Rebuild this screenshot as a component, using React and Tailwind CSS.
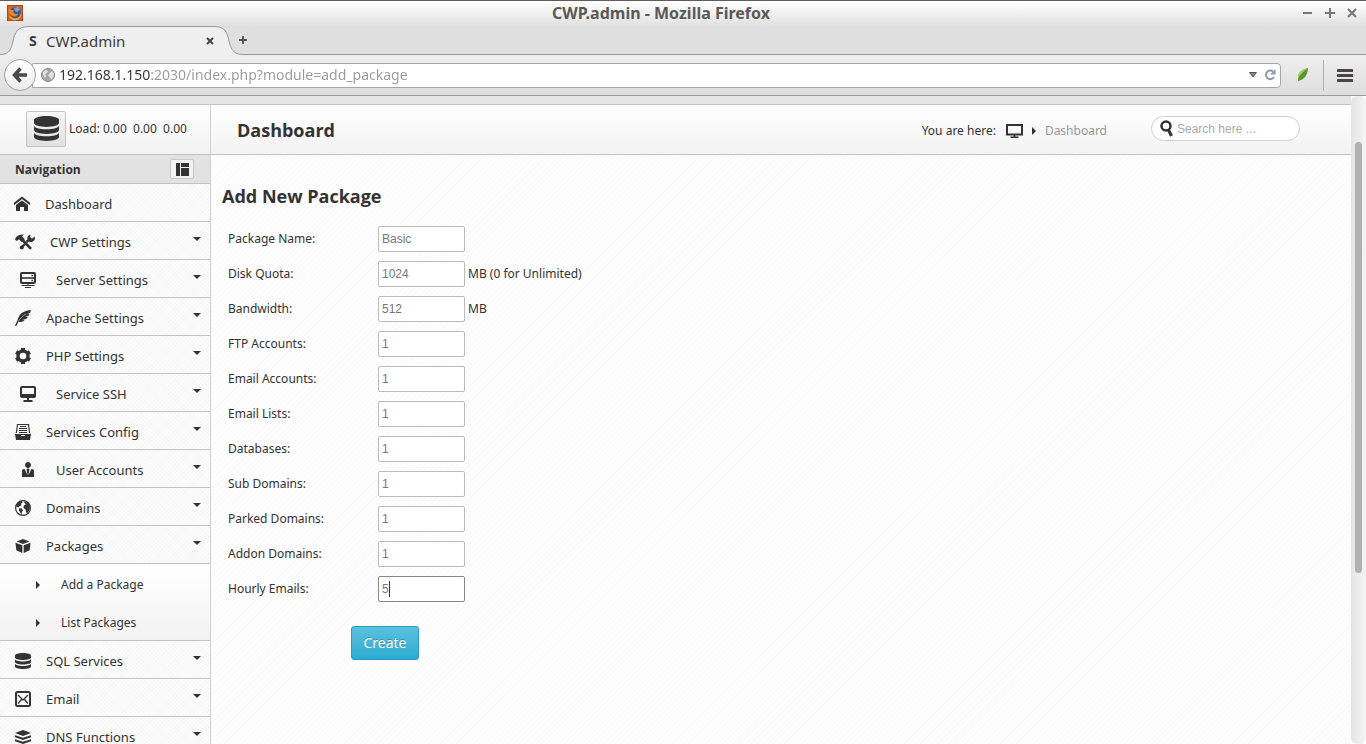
import React, { useState } from 'react';
import { ImHome, ImDatabase, ImUserTie } from 'react-icons/im';

const ToolsIcon = () => (
  <svg viewBox="0 0 20 16" className="w-5 h-4" fill="none" stroke="currentColor">
    <path d="M0 5.500C1 2 4 .3 9 .5L7 2.200l2.800 3-3 3L4 5.200 1.800 7z" fill="currentColor" stroke="none" />
    <path d="M8 6.500l8 8.300" strokeWidth="2.600" />
    <path d="M6.500 13.500L10 10M11.500 8L15 5" strokeWidth="2.400" />
    <path d="M19.500 2.500a3.800 3.800 0 1 1-4-2L15 3l2 1.800z" fill="currentColor" stroke="none" />
    <circle cx="6.800" cy="13.600" r="2" fill="currentColor" stroke="none" />
  </svg>
);

const ServerIcon = () => (
  <svg viewBox="0 0 16 16" className="w-4 h-4" fill="none" stroke="currentColor">
    <rect x="1" y="1" width="14" height="10" rx="1" strokeWidth="2" />
    <path d="M1 6h14" strokeWidth="1.600" />
    <path d="M11.500 3.500h1.600M11.500 8.500h1.600" strokeWidth="1.400" />
    <path d="M8 11v3M1.500 13.500h13M5 15.500h6" strokeWidth="1.200" />
  </svg>
);

const FeatherIcon = () => (
  <svg viewBox="0 0 16 16" className="w-4 h-4" fill="currentColor">
    <path d="M16 0C10 .5 5 3 3.500 7.500 2.500 10.500 1 13 0 16h1.300l2-4c2.200.2 4.300-.3 6.200-1.500L7.700 9.800l3.600-.7 1.500-2-2.600-.2 3.500-1.200.8-1.700-2.300.2 2.900-1.500z" />
    <path d="M11 4C8 5.500 5 8.500 3 12" fill="none" stroke="#fafafa" strokeWidth=".5" />
  </svg>
);

const GearIcon = () => (
  <svg viewBox="0 0 16 16" className="w-4 h-4" fill="none" stroke="currentColor">
    <circle cx="8" cy="8" r="5" strokeWidth="3.400" />
    <path d="M8 0v3M8 13v3M1.100 4l2.600 1.500M12.300 10.500l2.600 1.500M1.100 12l2.600-1.500M12.300 5.500L14.900 4" strokeWidth="4" />
  </svg>
);

const MonitorIcon = () => (
  <svg viewBox="0 0 16 16" className="w-4 h-4" fill="none" stroke="currentColor">
    <rect x="1" y="1" width="14" height="10" rx="1" strokeWidth="2" />
    <path d="M1 9.500h14" strokeWidth="3" />
    <path d="M8 11v3M3.500 15h9" strokeWidth="2" />
  </svg>
);

const DisplayIcon = () => (
  <svg viewBox="0 0 17 14" className="w-[17px] h-[14px]" fill="none" stroke="currentColor">
    <rect x="1" y="1" width="15" height="9.500" strokeWidth="2" />
    <path d="M8.500 10v3M4.500 13.200h8" strokeWidth="1.600" />
  </svg>
);

const DrawerIcon = () => (
  <svg viewBox="0 0 16 16" className="w-4 h-4" fill="currentColor">
    <path fillRule="evenodd" d="M2 0h12l1.200 9h-1.200L13 1H3L2 9H.8z" />
    <path d="M5 2h6v1H5zM4 4h8v1H4zM4 6h8v1H4zM4 8h8v1H4z" />
    <path fillRule="evenodd" d="M0 10h16l-1 6H1zM6 11v1h4v-1z" />
  </svg>
);

const EarthIcon = () => (
  <svg viewBox="0 0 16 16" className="w-4 h-4">
    <circle cx="8" cy="8" r="7.400" fill="none" stroke="currentColor" strokeWidth="1.200" />
    <path d="M1 6C2 3 4 1.200 7 1l.5 1.500L5.800 4l1 1-2.300 1.200L3.500 7.500z" fill="currentColor" />
    <path d="M4 8.500l2.500-.2L8 10.500 6.800 12l-.3 2.500C5 13 4.800 11.500 4 10.500z" fill="currentColor" />
    <path d="M9 1.500l4 1.200L15 6l-.5 4-2 3-1.500-.5-.3-3L8.500 8l.3-2.500L11 4.500 9.500 3z" fill="currentColor" />
  </svg>
);

const PackageIcon = () => (
  <svg viewBox="0 0 16 16" className="w-4 h-4" fill="currentColor">
    <path d="M8 1l6.500 2.500L8 6 1.500 3.500z" />
    <path d="M.5 4.700L7.300 7.200V15L1.300 12.300z" />
    <path d="M15.500 4.700L8.700 7.200V15l6-2.700z" />
  </svg>
);

const EmailIcon = () => (
  <svg viewBox="0 0 16 16" className="w-4 h-4" fill="none" stroke="currentColor">
    <rect x="1" y="1" width="14" height="14" rx="1.500" strokeWidth="2" />
    <path d="M3 4l5 5 5-5M3 12.500l3.500-4M13 12.500l-3.500-4" strokeWidth="1.300" />
  </svg>
);

const StackIcon = () => (
  <svg viewBox="0 0 16 16" className="w-4 h-4" fill="currentColor">
    <path d="M8 1l8 3-8 3-8-3z" />
    <path d="M0 6.200l8 2.600 8-2.600v2L8 11 0 8.200z" />
    <path d="M0 10.200l8 2.600 8-2.600v2L8 15 0 12.200z" />
  </svg>
);

const LayoutIcon = () => (
  <svg viewBox="0 0 13 13" className="w-[13px] h-[13px]" fill="currentColor">
    <path d="M0 0h4v13H0zM5 0h8v4H5zM5 5h8v8H5z" />
  </svg>
);

const Globe = () => (
  <svg viewBox="0 0 14 14" className="w-[14px] h-[14px] shrink-0">
    <circle cx="7" cy="7" r="6.500" fill="#a6a6a6" stroke="#8c8c8c" />
    <path d="M2 4l3-2 2 1-1 2-2 1 1 2-1 2-2-3zM8 6l3-3 2 3-1 3-2 3-1-3-2-1z" fill="#e4e4e4" />
  </svg>
);

const FirefoxLogo = () => (
  <svg viewBox="0 0 16 16" className="w-4 h-4">
    <rect width="16" height="16" fill="#b4421c" />
    <rect x="1" y="1" width="14" height="14" fill="#d9601f" />
    <circle cx="8.500" cy="7.500" r="5.500" fill="#2a5f9e" />
    <path d="M7 3l4-1 2 3-3 2-2-1z" fill="#6fa6d6" />
    <path d="M2 3l2 2 3 0-1 2 2 2 3 0c-1 3-5 3-7 1C2 8 1 6 2 3z" fill="#e9842a" />
    <path d="M13 3c2 4 1 9-3 10-3 1-6 0-8-3 1 5 5 6 8 5 4-1 6-6 3-12z" fill="#f2a63a" />
  </svg>
);

const navItems = [
  { label: 'Dashboard', icon: <ImHome className="w-4 h-4" />, row: 'pl-[14px] gap-[15px]', leaf: true },
  { label: 'CWP Settings', icon: <ToolsIcon />, row: 'pl-[15px] gap-[15px]' },
  { label: 'Server Settings', icon: <ServerIcon />, row: 'pl-5 gap-5' },
  { label: 'Apache Settings', icon: <FeatherIcon />, row: 'pl-[15px] gap-[15px]' },
  { label: 'PHP Settings', icon: <GearIcon />, row: 'pl-[15px] gap-[15px]' },
  { label: 'Service SSH', icon: <MonitorIcon />, row: 'pl-5 gap-5' },
  { label: 'Services Config', icon: <DrawerIcon />, row: 'pl-[15px] gap-[15px]' },
  { label: 'User Accounts', icon: <ImUserTie className="w-4 h-4" />, row: 'pl-5 gap-5' },
  { label: 'Domains', icon: <EarthIcon />, row: 'pl-[15px] gap-[15px]' },
  { label: 'Packages', icon: <PackageIcon />, row: 'pl-[15px] gap-[15px]', sub: ['Add a Package', 'List Packages'] },
  { label: 'SQL Services', icon: <ImDatabase className="w-4 h-4" />, row: 'pl-[15px] gap-[15px]' },
  { label: 'Email', icon: <EmailIcon />, row: 'pl-[15px] gap-[15px]' },
  { label: 'DNS Functions', icon: <StackIcon />, row: 'pl-[15px] gap-[15px]' },
];

const fields = [
  { id: 'package_name', label: 'Package Name:', value: 'Basic' },
  { id: 'disk_quota', label: 'Disk Quota:', value: '1024', hint: 'MB (0 for Unlimited)' },
  { id: 'bandwidth', label: 'Bandwidth:', value: '512', hint: 'MB' },
  { id: 'ftp_accounts', label: 'FTP Accounts:', value: '1' },
  { id: 'email_accounts', label: 'Email Accounts:', value: '1' },
  { id: 'email_lists', label: 'Email Lists:', value: '1' },
  { id: 'databases', label: 'Databases:', value: '1' },
  { id: 'sub_domains', label: 'Sub Domains:', value: '1' },
  { id: 'parked_domains', label: 'Parked Domains:', value: '1' },
  { id: 'addon_domains', label: 'Addon Domains:', value: '1' },
  { id: 'hourly_emails', label: 'Hourly Emails:', value: '5', active: true },
];

const BrowserChrome = () => {
  const [url, setUrl] = useState('192.168.1.150:2030/index.php?module=add_package');

  return (
    <div className="shrink-0 text-[#3c3c3c]">
      <div className="bg-[linear-gradient(#ffffff,#dfdfdf_26px)] border-t border-[#5f5b5f]">
        {/* Title bar */}
        <div className="h-6 flex items-center pl-[7px] pr-[9px]">
          <FirefoxLogo />
          <div className="flex-1 pl-8 pr-9 text-center text-[16px] leading-5 font-bold text-[#5b5855]">CWP.admin - Mozilla Firefox</div>
          <div className="flex gap-3 text-[#777]">
            <button aria-label="Minimize"><svg viewBox="0 0 10 10" className="w-[10px] h-[10px]"><path d="M0 5h9" stroke="currentColor" strokeWidth="2" /></svg></button>
            <button aria-label="Maximize"><svg viewBox="0 0 10 10" className="w-[10px] h-[10px]"><path d="M0 5h10M5 0v10" stroke="currentColor" strokeWidth="2" /></svg></button>
            <button aria-label="Close"><svg viewBox="0 0 10 10" className="w-[10px] h-[10px]"><path d="M1 1l8 8M9 1l-8 8" stroke="currentColor" strokeWidth="2" /></svg></button>
          </div>
        </div>

        {/* Tabs */}
        <div className="h-[30px] pt-px flex">
          <svg viewBox="0 0 29 29" className="w-[29px] h-[29px] shrink-0">
            <path d="M0 28.500C10 28.500 11 23 13 15C15 6 18 .5 29 .5V29H0z" fill="#efefef" />
            <path d="M0 28.500C10 28.500 11 23 13 15C15 6 18 .5 29 .5" fill="none" stroke="#999" />
          </svg>
          <div className="w-[185px] flex items-center border-t border-[#999] bg-[#efefef]">
            <span className="w-[17px] text-[14px] leading-5 font-bold">S</span>
            <span className="flex-1 text-[15px] leading-5">CWP.admin</span>
            <button aria-label="Close tab">
              <svg viewBox="0 0 8 8" className="w-2 h-2"><path d="M1 1l6 6M7 1l-6 6" stroke="#444" strokeWidth="2" /></svg>
            </button>
          </div>
          <svg viewBox="0 0 29 29" className="w-[29px] h-[29px] shrink-0">
            <path d="M29 28.500C19 28.500 17 23 15 15C13 6 11 .5 0 .5V29H29z" fill="#efefef" />
            <path d="M29 28.500C19 28.500 17 23 15 15C13 6 11 .5 0 .5" fill="none" stroke="#999" />
          </svg>
          <div className="flex-1 flex items-center border-b border-[#999]">
            <button aria-label="New tab" className="-ml-1">
              <svg viewBox="0 0 8 8" className="w-2 h-2"><path d="M0 4h8M4 0v8" stroke="#555" strokeWidth="2" /></svg>
            </button>
          </div>
        </div>
      </div>

      {/* Navigation toolbar */}
      <div className="h-[41px] flex items-center pl-1 pr-[13px] border-b border-[#999] bg-linear-to-b from-[#eeeeee] to-[#dedede]">
        <button aria-label="Back" className="relative w-8 h-8 shrink-0 rounded-full border border-[#9aa1a9] bg-linear-to-b from-white to-[#ececec] flex items-center justify-center">
          <svg viewBox="0 0 16 16" className="w-4 h-4"><path d="M8.500 1.500L2.500 8l6 6.500M3 8h12" fill="none" stroke="#4a4a4a" strokeWidth="3.500" /></svg>
        </button>
        <div className="-ml-1 flex-1 h-[25px] flex items-center pl-2 pr-1 border border-[#a5a5a5] rounded-r-sm bg-white">
          <Globe />
          <input
            aria-label="Address"
            value={url}
            onChange={(e) => setUrl(e.target.value)}
            className="ml-1 flex-1 h-5 text-[14px] leading-5 outline-none text-transparent bg-clip-text bg-[linear-gradient(to_right,#333_92px,#999_92px)]"
          />
          <svg viewBox="0 0 8 6" className="w-2 h-[6px] mr-[7px]"><path d="M.5 .5h7L4 5z" fill="#888" stroke="#555" /></svg>
          <button aria-label="Reload">
            <svg viewBox="0 0 12 12" className="w-3 h-3"><path d="M9 2.500A4.300 4.300 0 1 0 10 8" fill="none" stroke="#8d9aa8" strokeWidth="2" /><path d="M11.500 0v5.500H6z" fill="#8d9aa8" /></svg>
          </button>
        </div>
        <svg viewBox="0 0 12 14" className="w-3 h-[14px] ml-4 mr-[14px] shrink-0">
          <path d="M11 0C6 1 1 4 1 9v4c5-1 10-5 10-13z" fill="#5f9432" />
          <path d="M11 0C6 1 1 4 1 9v3C2 7 6 4 11 0z" fill="#a3cf5c" />
        </svg>
        <span className="w-px h-[31px] bg-[#aab0b6] mr-[13px]" />
        <button aria-label="Menu">
          <svg viewBox="0 0 16 13" className="w-4 h-[13px]"><path d="M1 1.500h14M1 6.500h14M1 11.500h14" stroke="#4a4648" strokeWidth="3" strokeLinecap="round" /></svg>
        </button>
      </div>
    </div>
  );
};

const NavItem = ({ item }) => (
  <li>
    <a href="#" className={`h-[38px] pt-[3px] flex items-center border-b border-[#c2c2c2] text-[13px] leading-5 ${item.row}`}>
      {item.icon}
      <span className="flex-1">{item.label}</span>
      {!item.leaf && (
        <svg viewBox="0 0 8 4" className="w-2 h-1 mr-[9px] mb-[6px]"><path d="M0 0h8L4 4z" fill="currentColor" /></svg>
      )}
    </a>
    {item.sub && (
      <ul className="border-b border-[#c2c2c2] bg-linear-to-b from-white to-[#f2f2f2]">
        {item.sub.map((s) => (
          <li key={s}>
            <a href="#" className="h-[38px] pt-1 flex items-center gap-[21px] pl-9 text-[12px] leading-4">
              <svg viewBox="0 0 4 8" className="w-1 h-2"><path d="M0 0l4 4-4 4z" fill="currentColor" /></svg>
              {s}
            </a>
          </li>
        ))}
      </ul>
    )}
  </li>
);

const PackageForm = () => {
  const [values, setValues] = useState(Object.fromEntries(fields.map((f) => [f.id, f.value])));

  return (
    <form onSubmit={(e) => e.preventDefault()}>
      {fields.map((f) => (
        <div key={f.id} className="h-[35px] flex items-center pl-[6px]">
          <label htmlFor={f.id} className="w-[150px]">{f.label}</label>
          <div className="relative">
            <input
              id={f.id}
              value={values[f.id]}
              onChange={(e) => setValues({ ...values, [f.id]: e.target.value })}
              className={`block w-[87px] h-[26px] px-[3px] border rounded-xs bg-white font-['Liberation_Sans',sans-serif] text-[12px] text-[#777] outline-none ${f.active ? 'border-[#888]' : 'border-[#bbb]'}`}
            />
            {f.active && <span className="absolute left-[11px] top-[5px] w-px h-4 bg-[#333]" />}
          </div>
          {f.hint && <span className="pl-[3px]">{f.hint}</span>}
        </div>
      ))}
      <button className="mt-5 ml-[129px] w-[68px] h-[34px] rounded-[3px] border border-[#2a9cc4] bg-linear-to-b from-[#5bc0de] to-[#2aabd2] text-white text-[14px] leading-5 text-shadow-[0_-1px_0_rgba(0,0,0,0.25)]">
        Create
      </button>
    </form>
  );
};

const App = () => {
  const [search, setSearch] = useState('');

  return (
    <div className="h-screen flex flex-col overflow-hidden font-['Noto_Sans',sans-serif] text-[12px] leading-4 text-[#333]">
      <BrowserChrome />

      <div className="flex-1 min-h-0 flex">
        <div className="flex-1 min-w-0 flex flex-col overflow-hidden">
          <div className="h-[9px] shrink-0 border-b border-[#c2c2c2] bg-[#e4e4e4]" />

          {/* Header */}
          <header className="h-[50px] shrink-0 flex border-b border-[#c2c2c2] bg-linear-to-b from-white to-[#f2f2f2]">
            <div className="w-[211px] shrink-0 flex items-center pl-[26px] pb-[2px] gap-[3px] border-r border-[#d0d0d0]">
              <button aria-label="Server load" className="w-10 h-9 flex items-center justify-center border border-[#c4c4c4] rounded-xs bg-linear-to-b from-[#f7f7f7] to-[#e0e0e0]">
                <ImDatabase className="w-[25px] h-[25px]" />
              </button>
              <span className="whitespace-pre">Load: 0.00  0.00  0.00</span>
            </div>
            <div className="flex-1 flex items-center pl-[26px] pr-[51px]">
              <h1 className="flex-1 font-['Open_Sans',sans-serif] text-[18px] leading-6 font-bold">Dashboard</h1>
              <div className="flex items-center pt-[2px]">
                <span>You are here:</span>
                <span className="ml-[10px] mr-[9px]"><DisplayIcon /></span>
                <svg viewBox="0 0 4 8" className="w-1 h-2 mr-[9px]"><path d="M0 0l4 4-4 4z" fill="currentColor" /></svg>
                <span className="text-[#999]">Dashboard</span>
              </div>
              <label className="ml-11 w-[149px] h-[25px] mb-[2px] flex items-center pl-2 border border-[#d0d0d0] rounded-full bg-white">
                <svg viewBox="0 0 13 17" className="w-[13px] h-[17px] shrink-0"><circle cx="6" cy="6" r="4.500" fill="none" stroke="#333" strokeWidth="2.500" /><path d="M8.500 10l3 6" stroke="#333" strokeWidth="3" /></svg>
                <input
                  aria-label="Search"
                  placeholder="Search here ..."
                  value={search}
                  onChange={(e) => setSearch(e.target.value)}
                  className="ml-1 w-28 font-['Liberation_Sans',sans-serif] text-[12px] outline-none placeholder:text-[#aaa]"
                />
              </label>
            </div>
          </header>

          <div className="flex-1 min-h-0 flex">
            {/* Sidebar */}
            <aside className="w-[211px] shrink-0 overflow-hidden border-r border-[#d0d0d0] bg-[#fbfbfb] bg-[repeating-linear-gradient(45deg,rgba(0,0,0,0.010)_0_1px,transparent_1px_3px),repeating-linear-gradient(-45deg,rgba(0,0,0,0.010)_0_1px,transparent_1px_3px)]">
              <div className="h-[29px] flex items-center justify-between pl-[15px] pr-4 border-b border-[#c2c2c2] bg-[#e2e2e2]">
                <h2 className="pt-px font-['Open_Sans',sans-serif] font-bold">Navigation</h2>
                <button aria-label="Collapse navigation" className="w-6 h-5 flex items-center justify-center border border-[#c8c8c8] rounded-xs bg-[#f2f2f2]">
                  <LayoutIcon />
                </button>
              </div>
              <nav>
                <ul>
                  {navItems.map((item) => <NavItem key={item.label} item={item} />)}
                </ul>
              </nav>
            </aside>

            {/* Content */}
            <main className="flex-1 pl-[11px] pt-[29px] bg-[#fdfdfd] bg-[repeating-linear-gradient(-45deg,rgba(0,0,0,0.010)_0_1px,transparent_1px_4px)]">
              <h2 className="mb-[13px] font-['Open_Sans',sans-serif] text-[18px] leading-6 font-bold">Add New Package</h2>
              <PackageForm />
            </main>
          </div>
        </div>

        {/* Scrollbar */}
        <div className="w-[15px] shrink-0 flex flex-col items-center pt-[46px] rounded-t-md rounded-b-md bg-linear-to-r from-[#e4e4e4] to-[#f4f4f4]">
          <div className="w-[7px] h-[431px] rounded-full bg-[#b0b0b0]" />
        </div>
      </div>
    </div>
  );
};

export default App;
